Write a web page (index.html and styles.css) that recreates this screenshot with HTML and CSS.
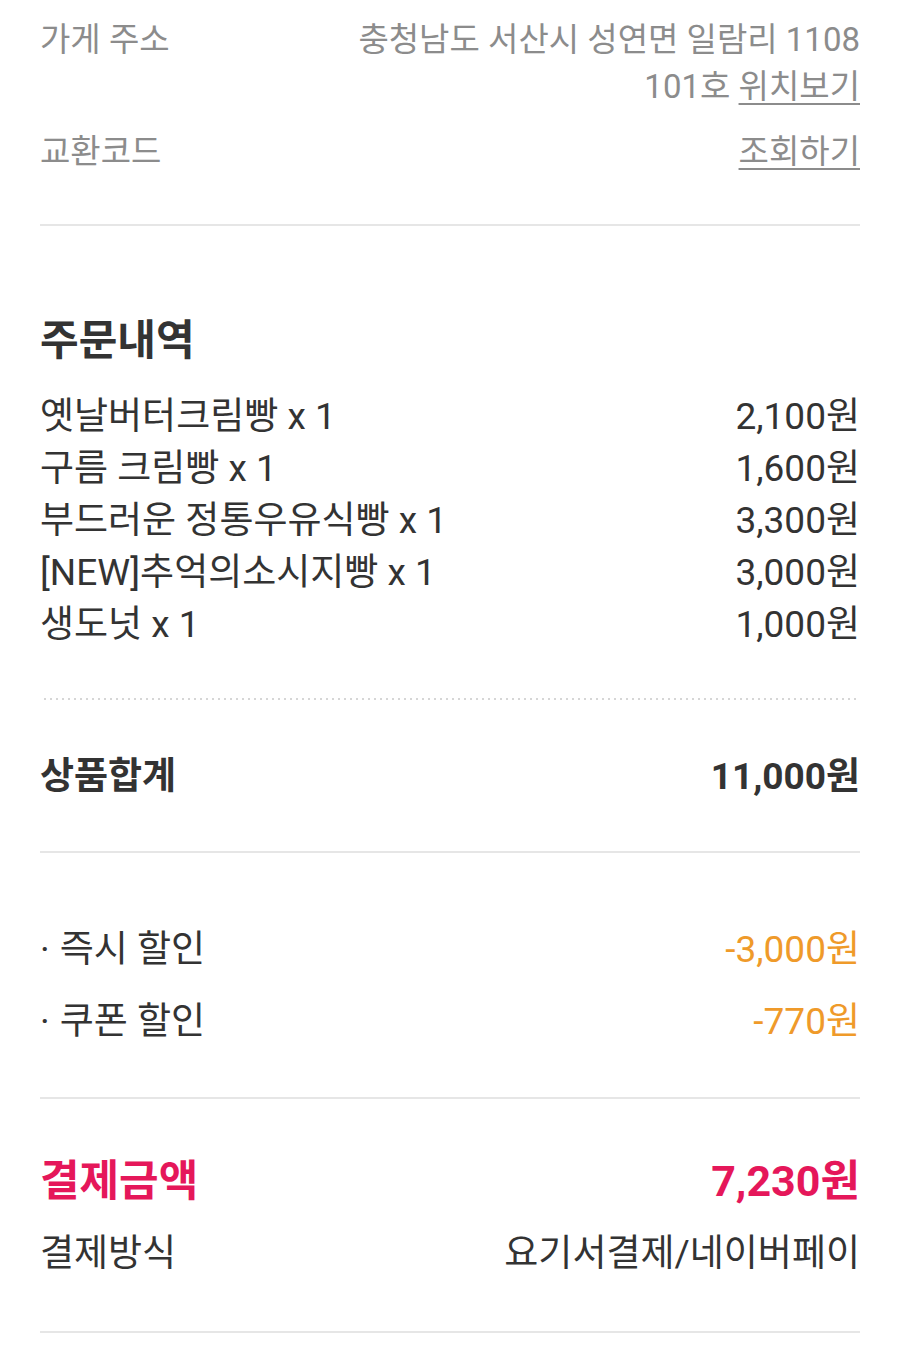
FILE: index.html
```html
<!DOCTYPE html>
<html lang="ko">
<head>
    <meta charset="UTF-8">
    <meta name="viewport" content="width=device-width, initial-scale=1.0">
    <title>주문상세</title>
    <link rel="stylesheet" href="styles.css">
</head>
<body>
    <div class="order-detail">
        <section class="store-info">
            <div class="info-row">
                <span class="info-label">가게 주소</span>
                <span class="info-value">충청남도 서산시 성연면 일람리 1108<br>101호 <a href="#" class="link">위치보기</a></span>
            </div>
            <div class="info-row code-row">
                <span class="info-label">교환코드</span>
                <span class="info-value"><a href="#" class="link">조회하기</a></span>
            </div>
        </section>

        <section class="order-items">
            <h2>주문내역</h2>
            <ul class="item-list">
                <li><span>옛날버터크림빵 x 1</span><span>2,100원</span></li>
                <li><span>구름 크림빵 x 1</span><span>1,600원</span></li>
                <li><span>부드러운 정통우유식빵 x 1</span><span>3,300원</span></li>
                <li><span>[NEW]추억의소시지빵 x 1</span><span>3,000원</span></li>
                <li><span>생도넛 x 1</span><span>1,000원</span></li>
            </ul>
        </section>

        <section class="subtotal">
            <span>상품합계</span>
            <span>11,000원</span>
        </section>

        <section class="discounts">
            <div class="discount-row">
                <span class="discount-label"><i class="dot">·</i>즉시 할인</span>
                <span class="discount-value">-3,000원</span>
            </div>
            <div class="discount-row">
                <span class="discount-label"><i class="dot">·</i>쿠폰 할인</span>
                <span class="discount-value">-770원</span>
            </div>
        </section>

        <section class="payment">
            <div class="pay-total">
                <span>결제금액</span>
                <span>7,230원</span>
            </div>
            <div class="pay-method">
                <span>결제방식</span>
                <span>요기서결제/네이버페이</span>
            </div>
        </section>
    </div>
</body>
</html>
```

FILE: styles.css
```css
body {
    margin: 0;
    font-family: Roboto, "Noto Sans CJK KR", sans-serif;
    background-color: #fff;
    color: #333;
}

.order-detail {
    padding: 0 40px;
}

section {
    border-bottom: 2px solid #e6e6e6;
}

/* store info */
.store-info {
    padding: 16px 0 49px;
    font-size: 33px;
    line-height: 47px;
    color: #8c8c8c;
}

.info-row {
    display: flex;
    justify-content: space-between;
}

.info-value {
    text-align: right;
}

.code-row {
    margin-top: 18px;
}

.link {
    color: #8c8c8c;
    text-decoration: underline;
    text-underline-offset: 5px;
    text-decoration-thickness: 2px;
}

/* order items */
.order-items {
    padding: 89px 0 49px;
    border-bottom: none;
    background-image: linear-gradient(to right, #d6d6d6 35%, transparent 35%);
    background-size: 6px 2px;
    background-repeat: repeat-x;
    background-position: 4px bottom;
}

.order-items h2 {
    margin: 0 0 24px;
    font-size: 42px;
    line-height: 52px;
    font-weight: bold;
}

.item-list {
    list-style: none;
    margin: 0;
    padding: 0;
    font-size: 37px;
    line-height: 52px;
}

.item-list li {
    display: flex;
    justify-content: space-between;
}

/* subtotal */
.subtotal {
    display: flex;
    justify-content: space-between;
    padding: 51px 0 48px;
    font-size: 37px;
    line-height: 52px;
    font-weight: bold;
}

/* discounts */
.discounts {
    padding: 71px 0 49px;
    font-size: 37px;
    line-height: 52px;
}

.discount-row {
    display: flex;
    justify-content: space-between;
}

.discount-row + .discount-row {
    margin-top: 20px;
}

.dot {
    font-style: normal;
    margin: 0 10px 0 0;
}

.discount-value {
    color: #ef9a2a;
}

/* payment */
.payment {
    padding: 54px 0 51px;
}

.pay-total {
    display: flex;
    justify-content: space-between;
    font-size: 43px;
    line-height: 56px;
    font-weight: bold;
    color: #e5175a;
}

.pay-method {
    display: flex;
    justify-content: space-between;
    margin-top: 19px;
    font-size: 37px;
    line-height: 52px;
}
```
